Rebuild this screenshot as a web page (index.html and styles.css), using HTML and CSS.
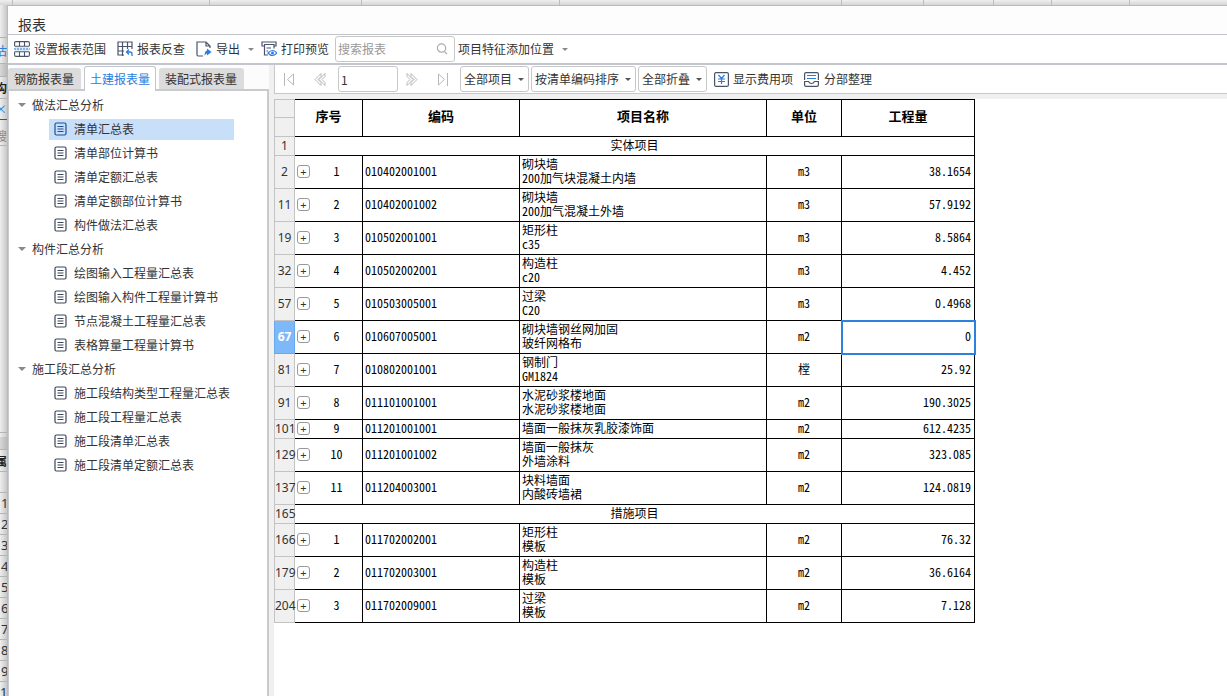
FILE: index.html
```html
<!DOCTYPE html>
<html lang="zh-CN">
<head>
<meta charset="utf-8">
<title>报表</title>
<link rel="stylesheet" href="styles.css">
</head>
<body>
<svg class="defs" aria-hidden="true">
  <symbol id="doc" viewBox="0 0 13 14"><rect x="1" y="1" width="11" height="12" rx="1.5" fill="none" stroke="currentColor" stroke-width="1.2"/><path d="M3.5 4.5h6M3.5 7h6M3.5 9.5h6" stroke="currentColor" fill="none"/></symbol>
</svg>
<div class="desktop">
  <div class="topstrip"><i></i><i></i><i></i><i></i><i></i><i></i><i></i><i></i><i></i></div>
  <div class="leftstrip">
    <div class="s gap-a"></div>
    <div class="s s-blue">估</div>
    <div class="s band"></div>
    <div class="s s-bold">构</div>
    <div class="s s-dash">×</div>
    <div class="s s-find">搜</div>
    <div class="s gap-b"></div>
    <div class="s band band-low"></div>
    <div class="s s-prop">属</div>
    <div class="s n"></div>
    <div class="s n">1</div><div class="s n">2</div><div class="s n">3</div><div class="s n">4</div><div class="s n">5</div><div class="s n">6</div><div class="s n">7</div><div class="s n">8</div><div class="s n">9</div><div class="s n wide">10</div>
  </div>
  <div class="window">
    <header class="title">报表</header>
    <div class="toolbar">
      <button class="tool"><svg width="16" height="16" viewBox="0 0 16 16" fill="none"><path d="M1 6h14v4H1z" fill="#dbeafb"/><path d="M.6 5V2Q.6.600 2 .6h12Q15.400.600 15.400 2v3M.6 11v3Q.6 15.400 2 15.400h12Q15.400 15.400 15.400 14v-3M5.500 1v4M10.500 1v4M5.500 11v4M10.500 11v4M.6 5.200h14.800M.6 10.800h14.800" stroke="#4a5468" stroke-width="1.100"/><path d="M0 8h16" stroke="#2b7de0" stroke-dasharray="2 1"/></svg>设置报表范围</button>
      <button class="tool"><svg width="16" height="16" viewBox="0 0 16 16" fill="none"><path d="M15 8V1H1v13h6M1 5.500h14M1 10h6M5.500 1v14M10.500 1v7" stroke="#4a5468" stroke-width="1.200"/><path d="M12 8.500L9.500 11l2.500 2.500M10 11h3q2 0 2 2v2" stroke="#2b7de0" stroke-width="1.300"/></svg>报表反查</button>
      <button class="tool export"><svg width="16" height="16" viewBox="0 0 16 16" fill="none"><path d="M7 15H2.200Q1 15 1 13.800V1h9l4 4v2M10 1v4h4" stroke="#4a5468" stroke-width="1.200"/><path d="M11 7.500l4.500 3.500-4.500 3.500v-2q-1.500 0-2.500 2.500 0-5 2.500-5.500z" fill="#2b7de0"/></svg>导出<span class="caret"></span></button>
      <button class="tool"><svg width="16" height="16" viewBox="0 0 16 16" fill="none"><path d="M3 5H1V1h14v4h-2M3 3.500h10v4M3.500 4v10H7M5.500 7H10M5.500 10H7" stroke="#4a5468" stroke-width="1.200"/><path d="M7 12q4.500-5 9 0-4.500 5-9 0z" stroke="#2b7de0" stroke-width="1.200"/><circle cx="11.500" cy="12" r="1.500" fill="#2b7de0"/></svg>打印预览</button>
      <label class="search"><input type="text" placeholder="搜索报表" aria-label="搜索报表"><svg width="12" height="12" viewBox="0 0 13 13" fill="none" stroke="#aaa" stroke-width="1.300"><circle cx="6" cy="5.500" r="4.500"/><path d="M9 9l3 3"/></svg></label>
      <button class="tool place">项目特征添加位置<span class="caret"></span></button>
    </div>
    <div class="body">
      <aside class="side">
        <nav class="tabs"><button class="tab">钢筋报表量</button><button class="tab on">土建报表量</button><button class="tab">装配式报表量</button></nav>
        <div class="tree">
          <button class="group"><span class="tri"></span>做法汇总分析</button>
          <button class="item on"><svg><use href="#doc"/></svg>清单汇总表</button>
          <button class="item"><svg><use href="#doc"/></svg>清单部位计算书</button>
          <button class="item"><svg><use href="#doc"/></svg>清单定额汇总表</button>
          <button class="item"><svg><use href="#doc"/></svg>清单定额部位计算书</button>
          <button class="item"><svg><use href="#doc"/></svg>构件做法汇总表</button>
          <button class="group"><span class="tri"></span>构件汇总分析</button>
          <button class="item"><svg><use href="#doc"/></svg>绘图输入工程量汇总表</button>
          <button class="item"><svg><use href="#doc"/></svg>绘图输入构件工程量计算书</button>
          <button class="item"><svg><use href="#doc"/></svg>节点混凝土工程量汇总表</button>
          <button class="item"><svg><use href="#doc"/></svg>表格算量工程量计算书</button>
          <button class="group"><span class="tri"></span>施工段汇总分析</button>
          <button class="item"><svg><use href="#doc"/></svg>施工段结构类型工程量汇总表</button>
          <button class="item"><svg><use href="#doc"/></svg>施工段工程量汇总表</button>
          <button class="item"><svg><use href="#doc"/></svg>施工段清单汇总表</button>
          <button class="item"><svg><use href="#doc"/></svg>施工段清单定额汇总表</button>
        </div>
      </aside>
      <main class="main">
        <div class="subbar">
          <div class="pager">
            <button class="nav" aria-label="首页"><svg width="12" height="13" viewBox="0 0 12 13"><path d="M1.500 0v13M10.500 1v11L4.500 6.500z"/></svg></button>
            <button class="nav" aria-label="上一页"><svg width="12" height="13" viewBox="0 0 12 13"><path d="M7 .5l-6 6 6 6v-3l-3-3 3-3zM11 .5l-6 6 6 6v-3l-3-3 3-3z"/></svg></button>
            <input class="page" type="text" value="1" aria-label="页码">
            <button class="nav" aria-label="下一页"><svg width="12" height="13" viewBox="0 0 12 13"><path d="M1 .5l6 6-6 6v-3l3-3-3-3zM5 .5l6 6-6 6v-3l3-3-3-3z"/></svg></button>
            <button class="nav" aria-label="末页"><svg width="12" height="13" viewBox="0 0 12 13"><path d="M10.500 0v13M1.500 1v11L7.500 6.500z"/></svg></button>
          </div>
          <div class="picks">
            <label class="pick"><select aria-label="项目"><option>全部项目</option></select><span class="caret dark"></span></label>
            <label class="pick"><select aria-label="排序"><option>按清单编码排序</option></select><span class="caret dark"></span></label>
            <label class="pick"><select aria-label="折叠"><option>全部折叠</option></select><span class="caret dark"></span></label>
          </div>
          <button class="tool"><svg width="15" height="15" viewBox="0 0 15 15" fill="none"><rect x=".6" y=".6" width="13.800" height="13.800" rx="1.500" stroke="#4a5468" stroke-width="1.200"/><path d="M4.500 3l3 3.500 3-3.500M7.500 6.500V12M4 7h7M4 9.500h7" stroke="#2b7de0" stroke-width="1.200"/></svg>显示费用项</button>
          <button class="tool second"><svg width="15" height="15" viewBox="0 0 15 15" fill="none"><path d="M.6 8V2Q.6.600 2 .6h11Q14.400.600 14.400 2v6M.6 9.500h3.900q1 2 3 2t3-2h3.900V13q0 1.400-1.400 1.400H2Q.6 14.400.6 13z" stroke="#4a5468" stroke-width="1.200"/><path d="M3 3.500h9M3 6.500h9" stroke="#2b7de0" stroke-width="1.200"/></svg>分部整理</button>
        </div>
        <div class="sheet">
          <table>
            <colgroup><col class="c-row"><col class="c-exp"><col class="c-no"><col class="c-code"><col class="c-name"><col class="c-unit"><col class="c-qty"></colgroup>
            <thead>
              <tr class="low"><td class="g"></td><th colspan="2" rowspan="2">序号</th><th rowspan="2">编码</th><th rowspan="2">项目名称</th><th rowspan="2">单位</th><th rowspan="2">工程量</th></tr>
              <tr class="low"><td class="g"></td></tr>
            </thead>
            <tbody>
              <tr class="low"><td class="g">1</td><td class="sec" colspan="6">实体项目</td></tr>
              <tr><td class="g">2</td><td class="e"><button aria-label="展开">+</button></td><td>1</td><td class="l">010402001001</td><td class="l">砌块墙<br>200加气块混凝土内墙</td><td>m3</td><td class="q">38.1654</td></tr>
              <tr><td class="g">11</td><td class="e"><button aria-label="展开">+</button></td><td>2</td><td class="l">010402001002</td><td class="l">砌块墙<br>200加气混凝土外墙</td><td>m3</td><td class="q">57.9192</td></tr>
              <tr><td class="g">19</td><td class="e"><button aria-label="展开">+</button></td><td>3</td><td class="l">010502001001</td><td class="l">矩形柱<br>c35</td><td>m3</td><td class="q">8.5864</td></tr>
              <tr><td class="g">32</td><td class="e"><button aria-label="展开">+</button></td><td>4</td><td class="l">010502002001</td><td class="l">构造柱<br>c20</td><td>m3</td><td class="q">4.452</td></tr>
              <tr><td class="g">57</td><td class="e"><button aria-label="展开">+</button></td><td>5</td><td class="l">010503005001</td><td class="l">过梁<br>C20</td><td>m3</td><td class="q">0.4968</td></tr>
              <tr><td class="g cur">67</td><td class="e"><button aria-label="展开">+</button></td><td>6</td><td class="l">010607005001</td><td class="l">砌块墙钢丝网加固<br>玻纤网格布</td><td>m2</td><td class="q picked">0</td></tr>
              <tr><td class="g">81</td><td class="e"><button aria-label="展开">+</button></td><td>7</td><td class="l">010802001001</td><td class="l">钢制门<br>GM1824</td><td>樘</td><td class="q">25.92</td></tr>
              <tr><td class="g">91</td><td class="e"><button aria-label="展开">+</button></td><td>8</td><td class="l">011101001001</td><td class="l">水泥砂浆楼地面<br>水泥砂浆楼地面</td><td>m2</td><td class="q">190.3025</td></tr>
              <tr class="low"><td class="g">101</td><td class="e"><button aria-label="展开">+</button></td><td>9</td><td class="l">011201001001</td><td class="l">墙面一般抹灰乳胶漆饰面</td><td>m2</td><td class="q">612.4235</td></tr>
              <tr><td class="g">129</td><td class="e"><button aria-label="展开">+</button></td><td>10</td><td class="l">011201001002</td><td class="l">墙面一般抹灰<br>外墙涂料</td><td>m2</td><td class="q">323.085</td></tr>
              <tr><td class="g">137</td><td class="e"><button aria-label="展开">+</button></td><td>11</td><td class="l">011204003001</td><td class="l">块料墙面<br>内酸砖墙裙</td><td>m2</td><td class="q">124.0819</td></tr>
              <tr class="low"><td class="g">165</td><td class="sec" colspan="6">措施项目</td></tr>
              <tr><td class="g">166</td><td class="e"><button aria-label="展开">+</button></td><td>1</td><td class="l">011702002001</td><td class="l">矩形柱<br>模板</td><td>m2</td><td class="q">76.32</td></tr>
              <tr><td class="g">179</td><td class="e"><button aria-label="展开">+</button></td><td>2</td><td class="l">011702003001</td><td class="l">构造柱<br>模板</td><td>m2</td><td class="q">36.6164</td></tr>
              <tr><td class="g">204</td><td class="e"><button aria-label="展开">+</button></td><td>3</td><td class="l">011702009001</td><td class="l">过梁<br>模板</td><td>m2</td><td class="q">7.128</td></tr>
            </tbody>
          </table>
        </div>
      </main>
    </div>
  </div>
</div>
</body>
</html>
```
FILE: styles.css
```css
* { box-sizing: border-box; }
html, body { height: 100%; margin: 0; overflow: hidden; }
body { font: 12px/16px "Noto Sans CJK SC", "Noto Sans", sans-serif; color: #333; background: #fff; }
button, input, select { font: inherit; color: inherit; }
button { background: none; border: 0; padding: 0; white-space: nowrap; }
svg { flex: none; display: block; }
.defs { position: absolute; width: 0; height: 0; }

.desktop { display: grid; grid-template: 5px minmax(0, 1fr) / 7px minmax(0, 1fr); height: 100%; }
.topstrip { grid-column: 1 / 3; display: grid; grid-template-columns: 13px 197px 152px 198px 282px 82px 70px 58px 78px; background: linear-gradient(#efefef, #d6d6d6); }
.topstrip i { border-right: 1px solid #bdbdbd; }
.leftstrip { display: flex; flex-direction: column; overflow: hidden; background: linear-gradient(to right, #eee, #c8c8c8); }
.s { flex: none; display: flex; align-items: center; justify-content: flex-end; overflow: hidden; border-bottom: 1px solid #b4b4b4; }
.gap-a { height: 33px; }
.s-blue { height: 26px; color: #2b7de0; }
.band { height: 13px; background: linear-gradient(to right, #d8d8d8, #b8b8b8); }
.s-bold { height: 22px; font-weight: 700; color: #222; }
.s-dash { height: 21px; color: #2b7de0; border-color: #4a5468; }
.s-find { height: 26px; padding-top: 6px; color: #888; }
.gap-b { height: 287px; }
.band-low { margin-top: 4px; }
.s-prop { height: 22px; font-weight: 700; color: #222; }
.n { height: 21px; justify-content: flex-start; padding-left: 1px; font: 13px/20px "Noto Sans", sans-serif; }
.wide { padding: 0; }

.window { display: flex; flex-direction: column; min-width: 0; background: #fff; border: solid #b9babd; border-width: 1px 0 0 1px; }
.title { height: 29px; padding: 8px 10px 0; font-size: 14px; line-height: 20px; background: #fdfdfd; border-bottom: 1px solid #c3c3ca; }
.toolbar { display: flex; align-items: center; height: 30px; padding-left: 6px; border-bottom: 2px solid #c3c6cc; }
.tool { display: flex; align-items: center; gap: 4px; margin-right: 11px; }
.caret { width: 0; height: 0; border: 3px solid transparent; border-top-color: #888; border-bottom: 0; }
.toolbar .caret { margin-left: 4px; }
.toolbar .export { margin-right: 7px; }
.caret.dark { border-top-color: #555; }
.search { display: flex; align-items: center; width: 120px; height: 26px; margin: 0 3px 0 -5px; padding: 0 6px 0 2px; border: 1px solid #c8c8c8; border-radius: 3px; background: #fff; }
.search input { flex: 1; min-width: 0; padding: 0; border: 0; outline: 0; background: none; }
.search input::placeholder { color: #999; opacity: 1; }

.body { flex: 1; display: grid; grid-template-columns: 261px minmax(0, 1fr); min-height: 0; }
.side { display: flex; flex-direction: column; min-height: 0; }
.tabs { display: flex; align-items: flex-end; gap: 3px; height: 24px; background: #fcfcfc; }
.tab { height: 21px; padding: 0 7px 0 6px; background: #dcdcdc; border-radius: 3px 3px 0 0; }
.tab.on { height: 25px; margin-bottom: -2px; z-index: 1; padding: 0 5px; color: #2b7de0; background: #fff; border: 1px solid #c3c6cc; border-bottom: 0; }
.tree { flex: 1; display: flex; flex-direction: column; align-items: flex-start; padding-top: 2px; border: 2px solid #c8cacd; border-left-width: 1px; border-bottom: 0; }
.group { display: flex; align-items: center; height: 24px; padding-left: 9px; }
.tri { margin-right: 6px; border: 4px solid transparent; border-top-color: #888; border-bottom: 0; }
.item { display: flex; align-items: center; align-self: stretch; gap: 7px; height: 21px; margin: 2px 33px 1px 40px; padding: 0 0 2px 5px; }
.item svg { width: 13px; height: 14px; color: #3d4659; }
.item.on { background: #c8dff9; }
.item.on svg { color: #1f4f96; }

.main { display: flex; flex-direction: column; min-width: 0; padding-left: 5px; background: #f0f0f0; }
.subbar { display: flex; align-items: center; height: 29px; background: #fff; border: solid #c8c8c8; border-width: 0 0 1px 1px; }
.pager { display: flex; align-items: center; }
.nav { width: 31px; display: flex; justify-content: center; }
.nav svg { fill: none; stroke: #b8b8b8; stroke-width: 1; }
.pager .nav:first-child { margin-left: -2px; }
.page { width: 60px; height: 26px; margin: 0 -2px 0 3px; padding: 0 2px; border: 1px solid #c8c8c8; border-radius: 3px; }
.picks { display: flex; gap: 2px; margin: 0 7px 0 2px; }
.pick { display: grid; align-items: center; }
.pick > * { grid-area: 1 / 1; }
.pick select { appearance: none; height: 26px; padding: 0 15px 0 3px; border: 1px solid #c8c8c8; border-radius: 3px; background: #fff; }
.pick .caret { justify-self: end; margin-right: 5px; pointer-events: none; }
.second { gap: 5px; }

.sheet { flex: 1; margin-top: 5px; background: #fff; overflow: hidden; }
table { width: 701px; table-layout: fixed; border-collapse: separate; border-spacing: 0; color: #000; line-height: 14px; }
.c-row { width: 21px; } .c-exp { width: 16px; } .c-no { width: 52px; } .c-code { width: 157px; } .c-name { width: 247px; } .c-unit { width: 75px; } .c-qty { width: 133px; }
tr { height: 33px; }
.low { height: 19px; }
td, th { padding: 0 0 2px; text-align: center; border: solid #000; border-width: 0 1px 1px 0; font-feature-settings: "hwid"; }
th { padding-bottom: 4px; border-top-width: 1px; font-size: 13px; line-height: 16px; }
td.g { padding: 0; font: 12px/16px "Noto Sans", sans-serif; font-feature-settings: normal; color: #333; background: #f0f0f0; border-color: #c3c3c3; border-left: 1px solid #c3c3c3; white-space: nowrap; }
thead tr:first-child .g { border-top: 1px solid #c3c3c3; }
td.cur { font-weight: 700; color: #fff; background: #7db8f8; border-color: #6aa8ec; }
td.e { border-right: 0; }
.e button { display: grid; place-items: center; width: 13px; height: 13px; margin-left: 2px; border: 1px solid #999; border-radius: 3px; font: 11px/11px "Noto Sans", sans-serif; color: #333; background: #fff; }
td.l { padding-left: 2px; text-align: left; }
td.q { padding-right: 3px; text-align: right; }
td.picked { outline: 2px solid #2b80e0; outline-offset: -1px; }
```
